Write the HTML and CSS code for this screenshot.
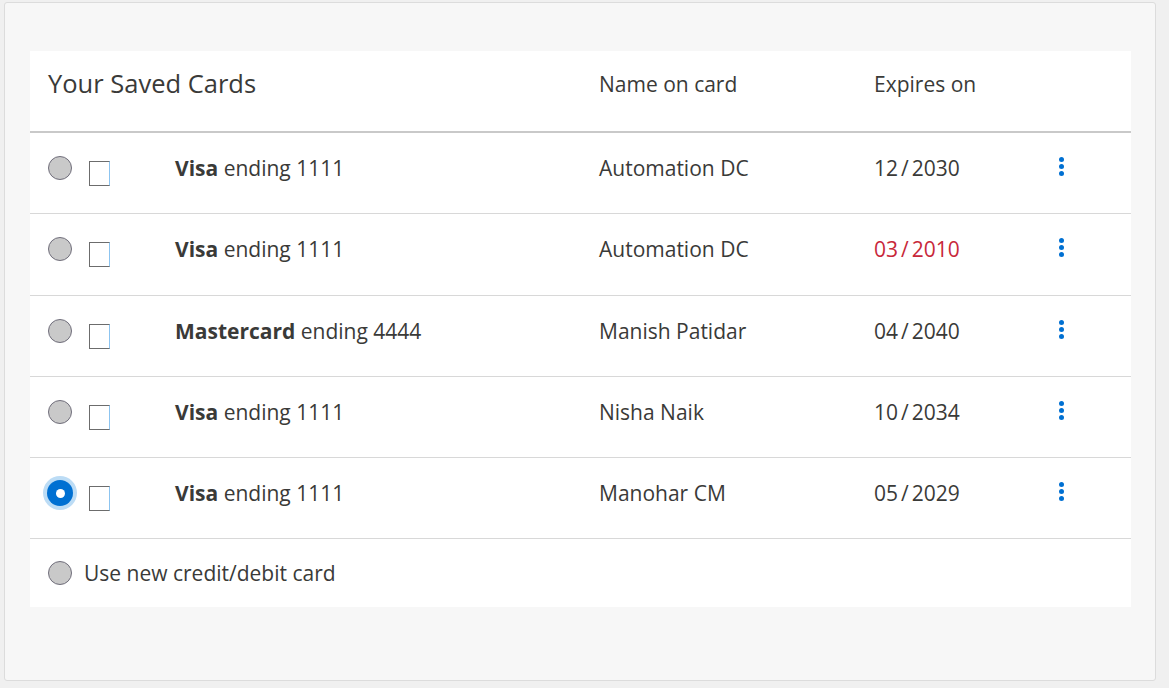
FILE: index.html
```html
<!DOCTYPE html>
<html lang="en">
<head>
<meta charset="utf-8">
<title>Your Saved Cards</title>
<link rel="stylesheet" href="styles.css">
</head>
<body>
<div class="panel">
  <div class="card">
    <div class="head">
      <div class="title">Your Saved Cards</div>
      <div class="col-label">Name on card</div>
      <div class="col-label">Expires on</div>
    </div>

    <div class="row">
      <div class="sel"><span class="radio"></span><span class="check"></span></div>
      <div class="cardname"><b>Visa</b> ending 1111</div>
      <div class="name">Automation DC</div>
      <div class="exp">12<span class="sl">/</span>2030</div>
      <div class="act"><span class="kebab"><i></i><i></i><i></i></span></div>
    </div>

    <div class="row">
      <div class="sel"><span class="radio"></span><span class="check"></span></div>
      <div class="cardname"><b>Visa</b> ending 1111</div>
      <div class="name">Automation DC</div>
      <div class="exp expired">03<span class="sl">/</span>2010</div>
      <div class="act"><span class="kebab"><i></i><i></i><i></i></span></div>
    </div>

    <div class="row">
      <div class="sel"><span class="radio"></span><span class="check"></span></div>
      <div class="cardname"><b>Mastercard</b> ending 4444</div>
      <div class="name">Manish Patidar</div>
      <div class="exp">04<span class="sl">/</span>2040</div>
      <div class="act"><span class="kebab"><i></i><i></i><i></i></span></div>
    </div>

    <div class="row">
      <div class="sel"><span class="radio"></span><span class="check"></span></div>
      <div class="cardname"><b>Visa</b> ending 1111</div>
      <div class="name">Nisha Naik</div>
      <div class="exp">10<span class="sl">/</span>2034</div>
      <div class="act"><span class="kebab"><i></i><i></i><i></i></span></div>
    </div>

    <div class="row">
      <div class="sel"><span class="radio selected"></span><span class="check"></span></div>
      <div class="cardname"><b>Visa</b> ending 1111</div>
      <div class="name">Manohar CM</div>
      <div class="exp">05<span class="sl">/</span>2029</div>
      <div class="act"><span class="kebab"><i></i><i></i><i></i></span></div>
    </div>

    <div class="foot">
      <span class="radio"></span>
      <span class="foot-label">Use new credit/debit card</span>
    </div>
  </div>
</div>
</body>
</html>
```

FILE: styles.css
```css
html, body {
  margin: 0;
  padding: 0;
}
body {
  background: #f0f0f0;
  font-family: "Open Sans", "Liberation Sans", sans-serif;
  color: #3a3a38;
}
.panel {
  margin: 2px 13px 7px 4px;
  background: #f7f7f7;
  border: 1px solid #dcdcdc;
  border-radius: 3px;
  padding: 48px 24px 73px 25px;
}
.card {
  background: #fff;
}
.head {
  display: grid;
  grid-template-columns: 551px 275px 1fr;
  align-items: start;
  box-sizing: border-box;
  height: 82px;
  padding: 17px 0 0 18px;
  border-bottom: 2px solid #c9c9c9;
}
.title {
  font-size: 25.5px;
  line-height: 30px;
}
.col-label {
  font-size: 21px;
  line-height: 26px;
  margin-top: 3px;
}
.row {
  display: grid;
  grid-template-columns: 127px 424px 275px 170px 34px;
  align-items: start;
  height: 57.25px;
  padding: 23px 0 0 18px;
  border-bottom: 1px solid #d8d8d8;
  font-size: 21px;
  line-height: 24px;
}
.sel {
  display: flex;
  align-items: flex-start;
  gap: 17px;
}
.radio {
  display: block;
  box-sizing: border-box;
  width: 24px;
  height: 24px;
  border-radius: 50%;
  background: #c9c9c9;
  border: 1px solid #706e7b;
  flex: none;
}
.radio.selected {
  background: #0070d2;
  border: none;
  width: 26px;
  height: 26px;
  margin: -1px -1px 0 -1px;
  box-shadow: 0 0 0 4px #bcdcf5;
  position: relative;
}
.radio.selected::after {
  content: "";
  position: absolute;
  left: 8.5px;
  top: 8.5px;
  width: 9px;
  height: 9px;
  border-radius: 50%;
  background: #fff;
}
.check {
  display: block;
  box-sizing: border-box;
  width: 21px;
  height: 25px;
  margin-top: 5px;
  border: 1px solid #6c6c6c;
  border-right-color: #8cc4f0;
  background: #fff;
  flex: none;
}
.cardname b {
  font-weight: 700;
}
.sl {
  margin: 0 3px;
}
.expired {
  color: #c8283a;
}
.act {
  display: flex;
  justify-content: center;
}
.kebab {
  display: flex;
  flex-direction: column;
  gap: 2px;
  padding-top: 1px;
}
.kebab i {
  display: block;
  width: 5px;
  height: 5px;
  border-radius: 50%;
  background: #0070d2;
}
.foot {
  display: flex;
  align-items: center;
  gap: 12px;
  height: 68px;
  padding-left: 18px;
  font-size: 21px;
  line-height: 24px;
}
```
